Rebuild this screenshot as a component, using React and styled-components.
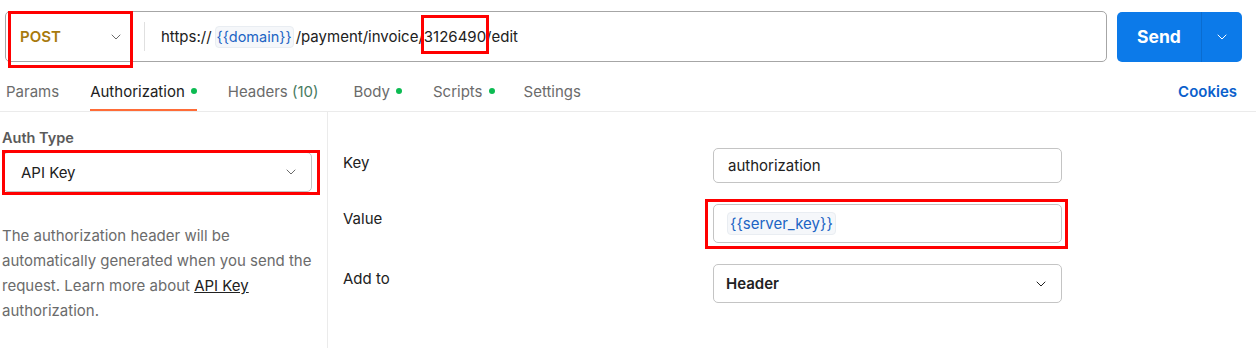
import React from "react";
import styled, { css, createGlobalStyle } from "styled-components";
import { ChevronDown } from "lucide-react";

const GlobalStyle = createGlobalStyle`
  body {
    margin: 0;
    background: #ffffff;
    font-family: Inter, "Noto Sans", sans-serif;
    font-size: 15px;
    color: #212121;
  }
`;

const Page = styled.div`
  width: 1256px;
  height: 348px;
  overflow: hidden;
`;

// red annotation frame drawn over a part of the page; $mark = [top, left, right, bottom]
const markFrame = css`
  position: relative;
  ${({ $mark }) =>
    $mark &&
    css`
      &::after {
        content: "";
        position: absolute;
        top: ${$mark[0]}px;
        left: ${$mark[1]}px;
        right: ${$mark[2]}px;
        bottom: ${$mark[3]}px;
        border: 3px solid #ff0000;
        pointer-events: none;
      }
    `}
`;

const TopBar = styled.div`
  display: flex;
  align-items: center;
  gap: 10px;
  padding: 11px 14px 0 5px;
`;

const UrlBox = styled.div`
  flex: 1;
  height: 51px;
  box-sizing: border-box;
  display: flex;
  align-items: center;
  border: 1px solid #a6a6a6;
  border-radius: 5px;
`;

const MethodSelect = styled.div`
  ${markFrame}
  width: 138px;
  height: 100%;
  box-sizing: border-box;
  display: flex;
  align-items: center;
  justify-content: space-between;
  padding: 0 20px 0 14px;
  font-weight: 600;
  color: #a87a0c;
`;

const Divider = styled.div`
  width: 1px;
  height: 29px;
  background: #e0e0e0;
`;

const UrlText = styled.div`
  display: flex;
  align-items: center;
  padding-left: 16px;
  white-space: pre;
  color: #212121;
`;

const VarChip = styled.span`
  display: inline-flex;
  align-items: center;
  height: ${({ $h }) => $h || 20}px;
  padding: 0 ${({ $px }) => $px ?? 2}px;
  margin: 0 ${({ $mr }) => $mr || 0}px 0 ${({ $ml }) => $ml || 0}px;
  font-size: ${({ $fs }) => $fs || 15}px;
  background: #f5f7fa;
  border: 1px solid #e9edf2;
  border-radius: 4px;
  color: #2064c4;
`;

const NumberMark = styled.span`
  position: relative;
  &::after {
    content: "";
    position: absolute;
    top: -12px;
    bottom: -8px;
    left: -3px;
    right: -3px;
    border: 3px solid #ff0000;
  }
`;

const SendGroup = styled.div`
  display: flex;
  width: 125px;
  height: 50px;
  background: #0c7ae9;
  border-radius: 5px;
  color: #ffffff;
`;

const SendLabel = styled.div`
  flex: 1;
  display: flex;
  align-items: center;
  justify-content: center;
  font-size: 17.5px;
  font-weight: 700;
  border-right: 1px solid #0a6cd0;
`;

const SendArrow = styled.div`
  width: 40px;
  display: flex;
  align-items: center;
  justify-content: center;
`;

const TabsRow = styled.div`
  display: flex;
  align-items: stretch;
  height: 50px;
  box-sizing: border-box;
  padding: 9px 19px 0 6px;
  border-bottom: 1px solid #ebebeb;
`;

const Tab = styled.div`
  display: flex;
  align-items: center;
  gap: 6px;
  margin-right: ${({ $gap }) => $gap || 31}px;
  color: ${({ $active }) => ($active ? "#212121" : "#6b6b6b")};
  box-shadow: ${({ $active }) => ($active ? "inset 0 -2px 0 #ff6c37" : "none")};
`;

const Count = styled.span`
  color: #477a60;
`;

const Dot = styled.span`
  width: 6px;
  height: 6px;
  border-radius: 50%;
  background: #0cbb52;
`;

const CookiesLink = styled.div`
  margin-left: auto;
  display: flex;
  align-items: center;
  color: #0b5fcc;
  font-weight: 600;
`;

const Body = styled.div`
  display: flex;
`;

const LeftPanel = styled.div`
  width: 328px;
  height: 240px;
  border-right: 1px solid #ebebeb;
  padding: 17px 0 0 2px;
  box-sizing: border-box;
`;

const FieldLabel = styled.div`
  font-weight: 600;
  color: #5a5a5a;
  font-size: 14.5px;
  line-height: 17px;
  margin-bottom: 6px;
`;

const SelectBox = styled.div`
  ${markFrame}
  display: flex;
  align-items: center;
  justify-content: space-between;
  box-sizing: border-box;
  width: ${({ $w }) => $w}px;
  height: ${({ $h }) => $h}px;
  margin-left: ${({ $ml }) => $ml || 0}px;
  padding: 0 12px 0 ${({ $pl }) => $pl}px;
  border: 1px solid #c4c4c4;
  border-radius: 5px;
  font-weight: ${({ $bold }) => ($bold ? 600 : 400)};
  color: #212121;
`;

const HelpText = styled.p`
  margin: 31px 0 0 0;
  width: 316px;
  line-height: 25px;
  color: #6b6b6b;
`;

const DocLink = styled.span`
  color: #212121;
  text-decoration: underline;
`;

const RightPanel = styled.div`
  display: grid;
  grid-template-columns: 370px 349px;
  row-gap: 21px;
  align-content: start;
  padding: 36px 0 0 15px;
`;

const RowLabel = styled.div`
  padding-top: ${({ $pt }) => $pt}px;
  line-height: 17px;
  color: #212121;
`;

const InputBox = styled.div`
  ${markFrame}
  display: flex;
  align-items: center;
  box-sizing: border-box;
  height: ${({ $h }) => $h}px;
  padding: 0 14px;
  border: 1px solid #c4c4c4;
  border-radius: 5px;
  color: #212121;
`;

export default function App() {
  return (
    <Page>
      <GlobalStyle />
      <TopBar>
        <UrlBox>
          <MethodSelect $mark={[-1, 2, 11, -7]}>
            <span>POST</span>
            <ChevronDown size={16} strokeWidth={1.5} color="#6b6b6b" />
          </MethodSelect>
          <Divider />
          <UrlText>
            https://
            <VarChip $ml={3} $mr={2} $px={1} $fs={14.5}>
              {"{{domain}}"}
            </VarChip>
            /payment/invoice/<NumberMark>3126490</NumberMark>/edit
          </UrlText>
        </UrlBox>
        <SendGroup>
          <SendLabel>Send</SendLabel>
          <SendArrow>
            <ChevronDown size={16} strokeWidth={1.5} color="#ffffff" />
          </SendArrow>
        </SendGroup>
      </TopBar>

      <TabsRow>
        <Tab>Params</Tab>
        <Tab $active>
          Authorization <Dot />
        </Tab>
        <Tab $gap={35}>
          <span>
            Headers <Count>(10)</Count>
          </span>
        </Tab>
        <Tab>
          Body <Dot />
        </Tab>
        <Tab $gap={29}>
          Scripts <Dot />
        </Tab>
        <Tab>Settings</Tab>
        <CookiesLink>Cookies</CookiesLink>
      </TabsRow>

      <Body>
        <LeftPanel>
          <FieldLabel>Auth Type</FieldLabel>
          <SelectBox $w={309} $h={40} $ml={1} $pl={17} $mark={[-3, -2, -9, -4]}>
            <span>API Key</span>
            <ChevronDown size={16} strokeWidth={1.5} color="#6b6b6b" />
          </SelectBox>
          <HelpText>
            The authorization header will be automatically generated when you
            send the request. Learn more about <DocLink>API Key</DocLink>{" "}
            authorization.
          </HelpText>
        </LeftPanel>

        <RightPanel>
          <RowLabel $pt={6}>Key</RowLabel>
          <InputBox $h={35}>authorization</InputBox>
          <RowLabel $pt={6}>Value</RowLabel>
          <InputBox $h={39} $mark={[-6, -9, -7, -7]}>
            <VarChip $h={21} $ml={-1}>{"{{server_key}}"}</VarChip>
          </InputBox>
          <RowLabel $pt={6}>Add to</RowLabel>
          <SelectBox $w={349} $h={39} $pl={12} $bold>
            <span>Header</span>
            <ChevronDown size={16} strokeWidth={1.5} color="#212121" />
          </SelectBox>
        </RightPanel>
      </Body>
    </Page>
  );
}
